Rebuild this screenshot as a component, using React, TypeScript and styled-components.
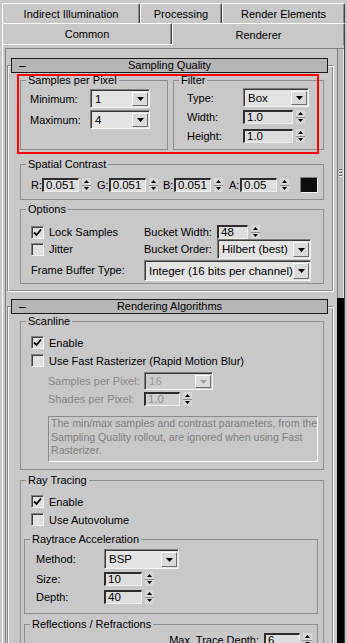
import React from 'react'
import styled, { createGlobalStyle } from 'styled-components'

const GlobalStyle = createGlobalStyle`
  html, body {
    margin: 0;
    padding: 0;
    background: #c8c8c8;
    overflow: hidden;
  }
  body {
    font-family: "Liberation Sans", Arial, sans-serif;
    font-size: 11px;
    color: #000;
  }
`

const Window = styled.div`
  width: 347px;
  height: 643px;
  overflow: hidden;
  background: #c8c8c8;
`

const TabStrip = styled.div`
  padding: 3px 2px 0 2px;
`

const TabRow = styled.div<{ $h: number }>`
  display: flex;
  height: ${(p) => p.$h}px;
`

const Tab = styled.div<{ $w: number; $active?: boolean }>`
  width: ${(p) => p.$w}px;
  height: ${(p) => (p.$active ? 'calc(100% + 1px)' : '100%')};
  box-sizing: border-box;
  display: flex;
  align-items: center;
  justify-content: center;
  border-top: 1px solid #fff;
  border-left: 1px solid #fff;
  border-right: 1px solid #404040;
  border-radius: 2px 2px 0 0;
  box-shadow: inset -1px 0 0 #8c8c8c;
  background: #c8c8c8;
  position: relative;
  z-index: ${(p) => (p.$active ? 2 : 0)};
  white-space: nowrap;
`

const TabPage = styled.div`
  margin: 0 2px;
  height: 600px;
  border-top: 1px solid #fff;
  border-left: 1px solid #fff;
  border-right: 1px solid #404040;
  padding: 3px 0 0 2px;
`

const CommandArea = styled.div`
  display: flex;
  height: 100%;
  border-top: 1px solid #808080;
  border-left: 1px solid #808080;
`

const RolloutColumn = styled.div`
  width: 331px;
  padding-left: 1px;
  box-sizing: border-box;
`

const ScrollTrack = styled.div`
  width: 7px;
  background: #000;
  display: flex;
  flex-direction: column;
`

const ScrollThumb = styled.div`
  height: 249px;
  box-sizing: border-box;
  background: #bdbdbd;
  border-left: 1px solid #7c7c7c;
  border-right: 1px solid #e8e8e8;
  display: flex;
  flex-direction: column;
  align-items: center;
  padding-top: 120px;
  gap: 2px;
`

const Grip = styled.div`
  width: 3px;
  height: 1px;
  background: #6a6a6a;
  box-shadow: 0 1px 0 #f0f0f0;
`

const Rollout = styled.div<{ $mt: number; $pb: number }>`
  margin-top: ${(p) => p.$mt}px;
  width: 327px;
  box-sizing: border-box;
  border: 1px solid;
  border-color: #8a8a8a #fafafa #fafafa #8a8a8a;
  box-shadow: inset 1px 1px 0 #f4f4f4, inset -1px -1px 0 #8a8a8a;
  padding: 0 9px ${(p) => p.$pb}px 12px;
`

const RolloutHeader = styled.div`
  width: 317px;
  height: 15px;
  margin: -8px 0 1px -9px;
  box-sizing: border-box;
  border: 1px solid #1a1a1a;
  background: #b6b6b6;
  display: flex;
  align-items: center;
`

const HeaderSign = styled.span`
  width: 24px;
  padding-left: 7px;
  box-sizing: border-box;
  font-size: 12px;
  line-height: 12px;
`

const HeaderTitle = styled.span`
  flex: 1;
  text-align: center;
  margin-right: 24px;
  line-height: 13px;
`

const Group = styled.fieldset<{ $mt?: number; $w?: number }>`
  margin: ${(p) => p.$mt ?? 0}px 0 0 0;
  padding: 0;
  min-width: 0;
  ${(p) => (p.$w ? `width: ${p.$w}px;` : '')}
  box-sizing: border-box;
  border: 1px solid #8e8e8e;
`

const Legend = styled.legend`
  margin-left: 5px;
  padding: 0 2px;
  font-size: 11px;
  line-height: 13px;
`

const GroupRow = styled.div`
  display: flex;
  gap: 5px;
  position: relative;
`

const Highlight = styled.div`
  position: absolute;
  left: -3px;
  top: 0;
  width: 302px;
  height: 80px;
  box-sizing: border-box;
  border: 2px solid #f00;
  pointer-events: none;
`

const FormGrid = styled.div<{ $cols: string; $pad: string; $gap?: number }>`
  display: grid;
  grid-template-columns: ${(p) => p.$cols};
  row-gap: ${(p) => p.$gap ?? 0}px;
  padding: ${(p) => p.$pad};
  align-items: center;
`

const Label = styled.span<{ $disabled?: boolean; $mt?: number }>`
  color: ${(p) => (p.$disabled ? '#878787' : '#000')};
  margin-top: ${(p) => p.$mt ?? 0}px;
  white-space: nowrap;
`

const Cell = styled.div<{ $mt?: number; $span?: string }>`
  margin-top: ${(p) => p.$mt ?? 0}px;
  ${(p) => (p.$span ? `grid-column: ${p.$span};` : '')}
`

const Combo = styled.div<{ $w: number; $h: number; $disabled?: boolean }>`
  width: ${(p) => p.$w}px;
  height: ${(p) => p.$h}px;
  box-sizing: border-box;
  display: flex;
  border-top: 1px solid #7c7c7c;
  border-left: 1px solid #7c7c7c;
  border-right: 1px solid #f4f4f4;
  border-bottom: 1px solid #f4f4f4;
  box-shadow: inset 1px 1px 0 #3a3a3a;
  background: ${(p) => (p.$disabled ? '#cdcdcd' : '#e3e3e3')};
  color: ${(p) => (p.$disabled ? '#9a9a9a' : '#000')};
`

const ComboText = styled.div`
  flex: 1;
  display: flex;
  align-items: center;
  padding-left: 4px;
  font-size: 11.5px;
  white-space: nowrap;
  overflow: hidden;
`

const ComboButton = styled.div`
  width: 16px;
  margin: 2px 1px 1px 0;
  box-sizing: border-box;
  background: #dadada;
  border-top: 1px solid #fff;
  border-left: 1px solid #fff;
  border-right: 1px solid #6e6e6e;
  border-bottom: 1px solid #6e6e6e;
  display: flex;
  align-items: center;
  justify-content: center;
`

const SpinWrap = styled.div`
  display: flex;
  align-items: center;
`

const SpinField = styled.div<{ $w: number; $disabled?: boolean }>`
  width: ${(p) => p.$w}px;
  height: 14px;
  box-sizing: border-box;
  border-top: 2px solid #2e2e2e;
  border-left: 2px solid #2e2e2e;
  border-right: 1px solid #efefef;
  border-bottom: 1px solid #efefef;
  background: ${(p) => (p.$disabled ? '#cfcfcf' : '#dedede')};
  color: ${(p) => (p.$disabled ? '#8e8e8e' : '#000')};
  font-size: 11.5px;
  line-height: 11px;
  padding-left: 2px;
  white-space: nowrap;
  overflow: hidden;
`

const SpinArrows = styled.div`
  width: 9px;
  height: 14px;
  margin-left: 3px;
  display: flex;
  flex-direction: column;
`

const SpinHalf = styled.div`
  flex: 1;
  display: flex;
  align-items: center;
  justify-content: center;
  background: #d6d6d6;
  border-bottom: 1px solid #8a8a8a;
  &:last-child {
    border-bottom: none;
  }
`

const ContrastRow = styled.div`
  display: flex;
  align-items: center;
  gap: 6px;
  padding: 6px 0 6px 10px;
`

const ContrastItem = styled.div`
  width: 60px;
  display: flex;
  align-items: center;
`

const ChannelLabel = styled.span`
  width: 12px;
`

const Swatch = styled.div`
  width: 18px;
  height: 16px;
  margin-left: 5px;
  box-sizing: border-box;
  background: #0e0e0e;
  border-top: 1px solid #7c7c7c;
  border-left: 1px solid #7c7c7c;
  border-right: 1px solid #f0f0f0;
  border-bottom: 1px solid #f0f0f0;
`

const CheckRow = styled.label<{ $mt?: number; $ml?: number }>`
  display: flex;
  align-items: center;
  height: 13px;
  margin-top: ${(p) => p.$mt ?? 0}px;
  margin-left: ${(p) => p.$ml ?? 0}px;
  gap: 5px;
  white-space: nowrap;
`

const CheckBox = styled.span`
  width: 13px;
  height: 13px;
  box-sizing: border-box;
  border-top: 1px solid #808080;
  border-left: 1px solid #808080;
  border-right: 1px solid #f4f4f4;
  border-bottom: 1px solid #f4f4f4;
  box-shadow: inset 1px 1px 0 #404040;
  background: #e0e0e0;
  display: flex;
  align-items: center;
  justify-content: center;
`

const Stack = styled.div<{ $pad: string }>`
  display: flex;
  flex-direction: column;
  padding: ${(p) => p.$pad};
`

const Indent = styled.div`
  display: grid;
  grid-template-columns: 96px auto;
  grid-template-rows: 18px 14px;
  row-gap: 2px;
  margin: 5px 0 0 17px;
  align-items: center;
`

const Note = styled.div`
  width: 270px;
  height: 46px;
  margin: 10px 0 0 17px;
  box-sizing: border-box;
  border-top: 1px solid #8a8a8a;
  border-left: 1px solid #8a8a8a;
  border-right: 1px solid #fafafa;
  border-bottom: 1px solid #fafafa;
  padding: 0 0 0 2px;
  color: #7e7e7e;
  font-size: 10.6px;
  line-height: 13.5px;
  white-space: nowrap;
  overflow: hidden;
`

const TraceRow = styled.div`
  display: flex;
  justify-content: flex-end;
  align-items: center;
  gap: 5px;
  padding: 2px 5px 0 0;
`

const DownArrow = ({ color = '#000' }: { color?: string }) => (
  <svg width="7" height="4" viewBox="0 0 7 4">
    <path d="M0 0 L7 0 L3.5 4 Z" fill={color} />
  </svg>
)

const TinyArrow = ({ up }: { up?: boolean }) => (
  <svg width="5" height="3" viewBox="0 0 5 3">
    <path d={up ? 'M0 3 L5 3 L2.5 0 Z' : 'M0 0 L5 0 L2.5 3 Z'} fill="#000" />
  </svg>
)

const Check = () => (
  <svg width="9" height="9" viewBox="0 0 9 9">
    <path d="M1 4.5 L3.5 7 L8 1.5" stroke="#000" strokeWidth="1.8" fill="none" />
  </svg>
)

const Dropdown: React.FC<{ w: number; h: number; value: string; disabled?: boolean }> = ({ w, h, value, disabled }) => (
  <Combo $w={w} $h={h} $disabled={disabled}>
    <ComboText>{value}</ComboText>
    <ComboButton>
      <DownArrow color={disabled ? '#a0a0a0' : '#000'} />
    </ComboButton>
  </Combo>
)

const Spinner: React.FC<{ w: number; value: string; disabled?: boolean }> = ({ w, value, disabled }) => (
  <SpinWrap>
    <SpinField $w={w} $disabled={disabled}>{value}</SpinField>
    <SpinArrows>
      <SpinHalf><TinyArrow up /></SpinHalf>
      <SpinHalf><TinyArrow /></SpinHalf>
    </SpinArrows>
  </SpinWrap>
)

const CheckItem: React.FC<{ label: string; checked?: boolean; mt?: number; ml?: number }> = ({ label, checked, mt, ml }) => (
  <CheckRow $mt={mt} $ml={ml}>
    <CheckBox>{checked && <Check />}</CheckBox>
    <span>{label}</span>
  </CheckRow>
)

const channels = [
  { name: 'R:', value: '0.051' },
  { name: 'G:', value: '0.051' },
  { name: 'B:', value: '0.051' },
  { name: 'A:', value: '0.05' },
]

export default function App() {
  return (
    <Window>
      <GlobalStyle />
      <TabStrip>
        <TabRow $h={20}>
          <Tab $w={138}>Indirect Illumination</Tab>
          <Tab $w={82}>Processing</Tab>
          <Tab $w={123}>Render Elements</Tab>
        </TabRow>
        <TabRow $h={21}>
          <Tab $w={170}>Common</Tab>
          <Tab $w={173} $active>Renderer</Tab>
        </TabRow>
      </TabStrip>
      <TabPage>
        <CommandArea>
          <RolloutColumn>
            <Rollout $mt={16} $pb={7}>
              <RolloutHeader>
                <HeaderSign>–</HeaderSign>
                <HeaderTitle>Sampling Quality</HeaderTitle>
              </RolloutHeader>
              <GroupRow>
                <Group $w={148}>
                  <Legend>Samples per Pixel</Legend>
                  <FormGrid $cols="60px 60px" $pad="2px 0 20px 9px" $gap={2}>
                    <Label>Minimum:</Label>
                    <Dropdown w={60} h={19} value="1" />
                    <Label>Maximum:</Label>
                    <Dropdown w={60} h={19} value="4" />
                  </FormGrid>
                </Group>
                <Group $w={151}>
                  <Legend>Filter</Legend>
                  <FormGrid $cols="56px auto" $pad="1px 0 6px 13px">
                    <Label>Type:</Label>
                    <Dropdown w={66} h={19} value="Box" />
                    <Label $mt={3}>Width:</Label>
                    <Cell $mt={3}><Spinner w={50} value="1.0" /></Cell>
                    <Label $mt={5}>Height:</Label>
                    <Cell $mt={5}><Spinner w={50} value="1.0" /></Cell>
                  </FormGrid>
                </Group>
                <Highlight />
              </GroupRow>
              <Group $mt={8}>
                <Legend>Spatial Contrast</Legend>
                <ContrastRow>
                  {channels.map((c) => (
                    <ContrastItem key={c.name}>
                      <ChannelLabel>{c.name}</ChannelLabel>
                      <Spinner w={37} value={c.value} />
                    </ContrastItem>
                  ))}
                  <Swatch />
                </ContrastRow>
              </Group>
              <Group $mt={3}>
                <Legend>Options</Legend>
                <FormGrid $cols="113px 73px 94px" $pad="9px 0 2px 10px">
                  <CheckItem label="Lock Samples" checked />
                  <Label>Bucket Width:</Label>
                  <Spinner w={31} value="48" />
                  <CheckItem label="Jitter" />
                  <Label>Bucket Order:</Label>
                  <Dropdown w={94} h={20} value="Hilbert (best)" />
                  <Label>Frame Buffer Type:</Label>
                  <Cell $span="2 / 4" $mt={1}>
                    <Dropdown w={167} h={21} value="Integer (16 bits per channel)" />
                  </Cell>
                </FormGrid>
              </Group>
            </Rollout>

            <Rollout $mt={14} $pb={0}>
              <RolloutHeader>
                <HeaderSign>–</HeaderSign>
                <HeaderTitle>Rendering Algorithms</HeaderTitle>
              </RolloutHeader>
              <Group>
                <Legend>Scanline</Legend>
                <Stack $pad="8px 0 7px 10px">
                  <CheckItem label="Enable" checked />
                  <CheckItem label="Use Fast Rasterizer (Rapid Motion Blur)" mt={5} />
                  <Indent>
                    <Label $disabled>Samples per Pixel:</Label>
                    <Dropdown w={69} h={18} value="16" disabled />
                    <Label $disabled>Shades per Pixel:</Label>
                    <Spinner w={36} value="1.0" disabled />
                  </Indent>
                  <Note>
                    The min/max samples and contrast parameters, from the
                    <br />
                    Sampling Quality rollout, are ignored when using Fast
                    <br />
                    Rasterizer.
                  </Note>
                </Stack>
              </Group>
              <Group $mt={4}>
                <Legend>Ray Tracing</Legend>
                <Stack $pad="8px 5px 0 3px">
                  <CheckItem label="Enable" checked ml={7} />
                  <CheckItem label="Use Autovolume" mt={5} ml={7} />
                  <Group $mt={7}>
                    <Legend>Raytrace Acceleration</Legend>
                    <FormGrid $cols="68px auto" $pad="3px 0 9px 11px">
                      <Label>Method:</Label>
                      <Dropdown w={75} h={20} value="BSP" />
                      <Label $mt={3}>Size:</Label>
                      <Cell $mt={3}><Spinner w={38} value="10" /></Cell>
                      <Label $mt={4}>Depth:</Label>
                      <Cell $mt={4}><Spinner w={38} value="40" /></Cell>
                    </FormGrid>
                  </Group>
                  <Group $mt={4}>
                    <Legend>Reflections / Refractions</Legend>
                    <TraceRow>
                      <Label>Max. Trace Depth:</Label>
                      <Spinner w={36} value="6" />
                    </TraceRow>
                  </Group>
                </Stack>
              </Group>
            </Rollout>
          </RolloutColumn>
          <ScrollTrack>
            <ScrollThumb>
              <Grip />
              <Grip />
              <Grip />
            </ScrollThumb>
          </ScrollTrack>
        </CommandArea>
      </TabPage>
    </Window>
  )
}
